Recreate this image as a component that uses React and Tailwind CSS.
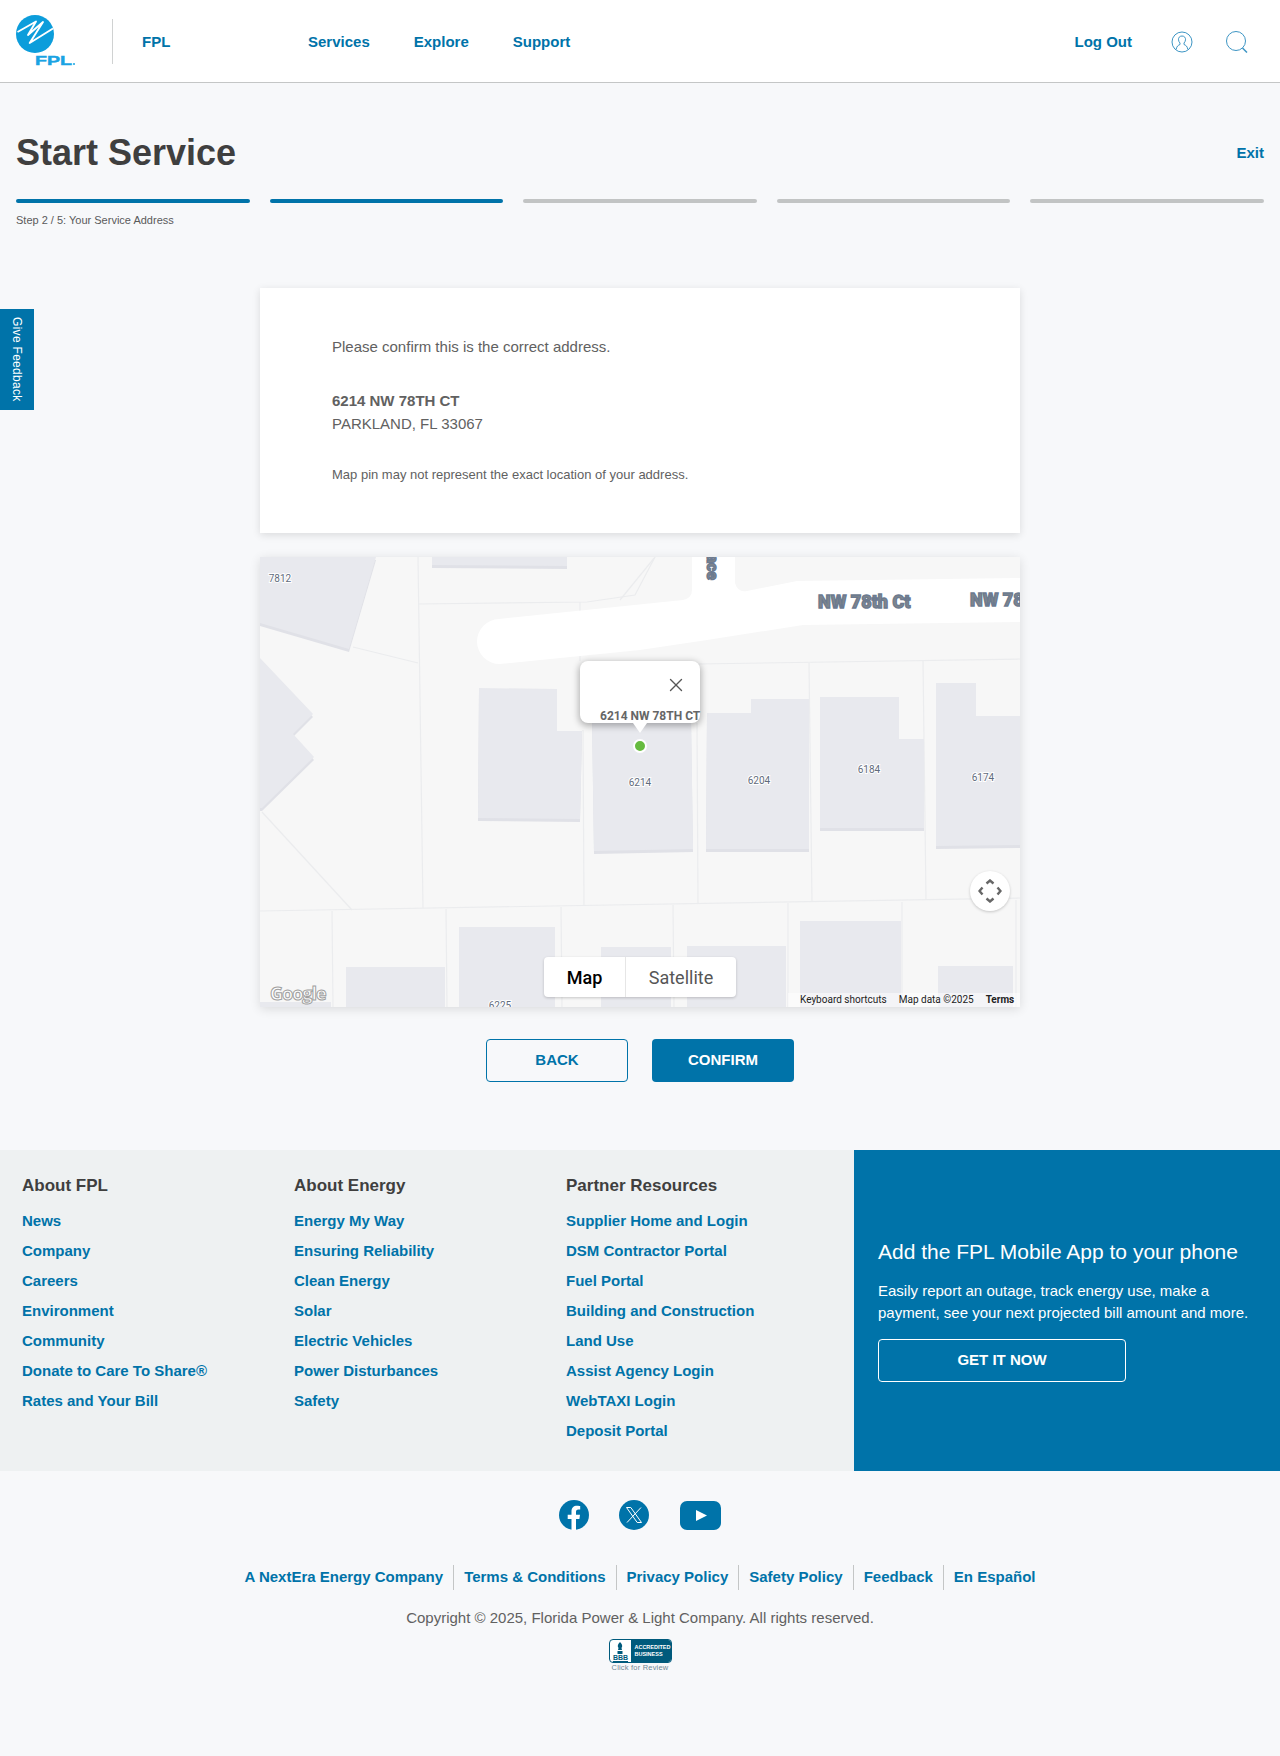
import { X } from 'lucide-react';

const aboutFpl = ['News', 'Company', 'Careers', 'Environment', 'Community', 'Donate to Care To Share®', 'Rates and Your Bill'];
const aboutEnergy = ['Energy My Way', 'Ensuring Reliability', 'Clean Energy', 'Solar', 'Electric Vehicles', 'Power Disturbances', 'Safety'];
const partners = ['Supplier Home and Login', 'DSM Contractor Portal', 'Fuel Portal', 'Building and Construction', 'Land Use', 'Assist Agency Login', 'WebTAXI Login', 'Deposit Portal'];
const legal = ['A NextEra Energy Company', 'Terms & Conditions', 'Privacy Policy', 'Safety Policy', 'Feedback', 'En Español'];

const buildings = [
  '0,0 116,0 89,92 0,66',
  '0,101 53,157 33,177 54,200 2,251 0,251',
  '172,0 307,0 307,9 172,8',
  '219,131 297,132 297,174 322,174 320,262 218,261',
  '332,160 431,160 433,292 334,294',
  '447,156 491,156 491,142 549,142 549,292 446,292',
  '560,140 639,140 639,182 664,182 664,271 560,271',
  '676,126 716,126 716,159 760,159 760,288 676,289',
  '86,410 185,410 185,450 86,450',
  '199,370 295,370 295,450 199,450',
  '341,390 411,390 411,450 341,450',
  '427,389 526,389 526,450 427,450',
  '540,364 641,364 641,450 540,450',
  '678,409 753,409 753,450 678,450',
  '0,445 71,445 71,450 0,450',
];

const lotLines = [
  'M158 0 L163 351', 'M158 47 L327 45 L375 38 L395 0', 'M360 43 L395 0', 'M93 90 L158 106',
  'M320 45 L320 104', 'M323 173 L324 348', 'M2 255 L92 353', 'M438 107 L760 102',
  'M0 354 L760 341', 'M437 166 L438 346', 'M549 106 L552 345', 'M663 104 L666 343',
  'M72 354 L73 450', 'M186 352 L187 450', 'M301 350 L302 450', 'M413 348 L414 450',
  'M528 346 L528 450', 'M642 345 L642 450', 'M756 343 L756 450',
];

const houseNumbers = [
  ['7812', 20, 25], ['6214', 380, 229], ['6204', 499, 227], ['6184', 609, 216], ['6174', 723, 224], ['6225', 240, 452],
];

const MapDrawing = () => (
  <svg className="absolute inset-0" width="760" height="450" viewBox="0 0 760 450">
    <rect width="760" height="450" fill="#f7f7f7" />
    {lotLines.map((d) => (
      <path key={d} d={d} fill="none" stroke="#ebecee" strokeWidth="1.2" />
    ))}
    {buildings.map((p) => (
      <polygon key={p} points={p} fill="#e0e1e7" transform="translate(0 3)" />
    ))}
    {buildings.map((p) => (
      <polygon key={p} points={p} fill="#e8e9ee" />
    ))}
    <path
      d="M239 62 L423 43 Q432 41 432 33 L432 0 L475 0 L475 26 Q478 36 487 34 L537 24 L760 21 L760 65 L543 68 L447 83 L380 93 L240 107 A22.500 22.500 0 0 1 239 62 Z"
      fill="#ffffff"
    />
    {houseNumbers.map(([n, x, y]) => (
      <text key={n} x={x} y={y} textAnchor="middle" fontFamily="Roboto, sans-serif" fontSize="10" fill="#5f6b7c" stroke="#ffffff" strokeWidth="2" paintOrder="stroke">
        {n}
      </text>
    ))}
    <g fontFamily="Roboto, sans-serif" fontWeight="900" fontSize="18" fill="#80868b" stroke="#6b7a90" strokeWidth="1.300">
      <text x="558" y="51">NW 78th Ct</text>
      <text x="710" y="49">NW 78th Ct</text>
    </g>
    <text transform="translate(447 23) rotate(90)" textAnchor="end" fontFamily="Roboto, sans-serif" fontWeight="900" fontSize="16" fill="#80868b" stroke="#6b7a90" strokeWidth="1.300">
      ace
    </text>
    <text x="10" y="443" fontFamily="'Open Sans', sans-serif" fontWeight="700" fontSize="18" letterSpacing="-1" fill="#ffffff" stroke="#a0a0a0" strokeWidth="1">
      Google
    </text>
  </svg>
);

const Logo = () => (
  <svg width="64" height="56" viewBox="0 0 64 56" className="shrink-0">
    <circle cx="19" cy="21" r="19" fill="#0c9ddb" />
    <path d="M1.500 19 L20 8.500 L12 22 L27 9 L13.700 30 L37 15.500" fill="none" stroke="#ffffff" strokeWidth="1.900" strokeLinejoin="round" />
    <text x="19" y="52" fontFamily="'Liberation Sans', sans-serif" fontWeight="700" fontSize="13" fill="#1aa3e3" stroke="#1aa3e3" strokeWidth=".4" textLength="37" lengthAdjust="spacingAndGlyphs">
      FPL
    </text>
    <circle cx="58" cy="51" r="1" fill="#1aa3e3" />
  </svg>
);

const UserIcon = () => (
  <svg width="22" height="22" viewBox="0 0 22 22" fill="none" stroke="#3d95c4" strokeWidth="1">
    <circle cx="11" cy="11" r="10" />
    <path d="M11 5 C8.500 5 7.300 6.800 7.500 8.800 C7.600 10.300 8.300 11.300 9 12 L9 13.500 C7.300 14.200 5.800 15 5.200 18.300 M11 5 C13.500 5 14.700 6.800 14.500 8.800 C14.400 10.300 13.700 11.300 13 12 L13 13.500 C14.700 14.200 16.200 15 16.800 18.300" />
  </svg>
);

const SearchIcon = () => (
  <svg width="22" height="22" viewBox="0 0 22 22" fill="none" stroke="#3d95c4" strokeWidth="1">
    <circle cx="10" cy="10" r="9.500" />
    <path d="M16.500 17 L21 21.500" strokeWidth="1.500" />
  </svg>
);

const FooterColumn = ({ title, links, className }) => (
  <div className={className}>
    <h3 className="text-[17px] leading-[20px] font-bold text-[#3f3f3f]">{title}</h3>
    <ul className="mt-[10px]">
      {links.map((link) => (
        <li key={link} className="h-[30px] text-[15px] leading-[30px] font-bold text-[#0073a9]">
          {link}
        </li>
      ))}
    </ul>
  </div>
);

const App = () => {
  return (
    <div className="relative min-h-[1756px] bg-[#f7f8fa] font-['Liberation_Sans',Arial,sans-serif] text-[#3f3f3f]">
      <header className="flex h-[83px] items-center border-b border-[#c4c6c6] bg-white pl-[16px] pr-[32px]">
        <Logo />
        <div className="ml-[32px] h-[45px] w-px bg-[#d0d2d2]" />
        <span className="ml-[29px] w-[166px] pt-[3px] text-[15px] font-bold text-[#0073a9]">FPL</span>
        <nav className="flex gap-[44px] pt-[3px] text-[15px] font-bold text-[#0073a9]">
          <span>Services</span>
          <span>Explore</span>
          <span>Support</span>
        </nav>
        <span className="ml-auto pt-[3px] text-[15px] font-bold text-[#0073a9]">Log Out</span>
        <div className="ml-[39px] flex gap-[33px] pt-[1px]">
          <UserIcon />
          <SearchIcon />
        </div>
      </header>

      <div className="absolute left-0 top-[309px] flex h-[101px] w-[34px] items-center justify-center bg-[#0073a9] text-[12px] tracking-[0.3px] text-white [writing-mode:vertical-rl]">
        Give Feedback
      </div>

      <main>
        <div className="px-[16px]">
          <div className="flex items-center justify-between pt-[48px]">
            <h1 className="text-[36px] leading-[44px] font-bold text-[#3f3f3f]">Start Service</h1>
            <a className="text-[15px] font-bold text-[#0073a9]">Exit</a>
          </div>
          <div className="mt-[24px] flex gap-[20px]">
            <div className="h-[4px] flex-1 rounded-sm bg-[#0073a9]" />
            <div className="h-[4px] flex-1 rounded-sm bg-[#0073a9]" />
            <div className="h-[4px] flex-1 rounded-sm bg-[#c2c4c4]" />
            <div className="h-[4px] flex-1 rounded-sm bg-[#c2c4c4]" />
            <div className="h-[4px] flex-1 rounded-sm bg-[#c2c4c4]" />
          </div>
          <p className="mt-[10px] text-[11px] leading-[14px] text-[#5a5a5a]">Step 2 / 5: Your Service Address</p>
        </div>

        <section className="mx-auto mt-[61px] h-[245px] w-[760px] bg-white pl-[72px] pt-[48px] text-[#616161] shadow-[0_2px_8px_rgba(0,0,0,0.12)]">
          <p className="text-[15px] leading-[22px]">Please confirm this is the correct address.</p>
          <p className="mt-[32px] text-[15px] leading-[22px] font-bold">6214 NW 78TH CT</p>
          <p className="text-[15px] leading-[23px]">PARKLAND, FL 33067</p>
          <p className="mt-[32px] text-[13px] leading-[16px]">Map pin may not represent the exact location of your address.</p>
        </section>

        <section className="relative mx-auto mt-[24px] h-[450px] w-[760px] overflow-hidden shadow-[0_2px_10px_rgba(0,0,0,0.12)]">
          <MapDrawing />

          <div className="absolute left-[320px] top-[104px] h-[62px] w-[120px] rounded-lg bg-white shadow-[0_2px_7px_1px_rgba(0,0,0,0.3)]">
            <X className="absolute right-[13px] top-[13px] h-[22px] w-[22px] text-[#565656]" strokeWidth={1.5} />
            <span className="absolute left-[20px] top-[48px] whitespace-nowrap font-['Roboto',sans-serif] text-[12px] leading-[14px] font-bold text-[#666666]">
              6214 NW 78TH CT
            </span>
          </div>
          <div className="absolute left-[373px] top-[166px] h-0 w-0 border-x-[7px] border-t-[10px] border-x-transparent border-t-white" />
          <div className="absolute left-[373px] top-[182px] h-[14px] w-[14px] rounded-full border-2 border-white bg-[#66bb3f]" />

          <div className="absolute left-[710px] top-[314px] flex h-[40px] w-[40px] items-center justify-center rounded-full bg-white shadow-[0_1px_3px_rgba(0,0,0,0.2)]">
            <svg width="24" height="24" viewBox="0 0 24 24" fill="none" stroke="#666666" strokeWidth="2.400">
              <path d="M8.500 4.500 L12 1.500 L15.500 4.500 M8.500 19.500 L12 22.500 L15.500 19.500 M4.500 8.500 L1.500 12 L4.500 15.500 M19.500 8.500 L22.500 12 L19.500 15.500" />
            </svg>
          </div>

          <div className="absolute left-[284px] top-[400px] flex h-[40px] w-[192px] rounded-sm bg-white font-['Roboto',sans-serif] text-[18px] shadow-[0_1px_3px_rgba(0,0,0,0.2)]">
            <div className="flex w-[82px] items-center justify-center border-r border-[#e6e6e6] font-medium text-black">Map</div>
            <div className="flex flex-1 items-center justify-center text-[#565656]">Satellite</div>
          </div>

          <div className="absolute bottom-0 right-0 flex h-[14px] w-[232px] items-center bg-white/50 pl-[12px] font-['Roboto',sans-serif] text-[10px] leading-[14px] text-[#222222]">
            <span>Keyboard shortcuts</span>
            <span className="ml-[12px]">Map data ©2025</span>
            <span className="ml-[12px] font-bold">Terms</span>
          </div>
        </section>

        <div className="mt-[32px] flex justify-center gap-[24px]">
          <button className="h-[43px] w-[142px] rounded border border-[#0073a9] text-[15px] font-bold text-[#0073a9]">BACK</button>
          <button className="h-[43px] w-[142px] rounded bg-[#0073a9] text-[15px] font-bold text-white">CONFIRM</button>
        </div>
      </main>

      <footer className="mt-[68px]">
        <div className="flex h-[321px]">
          <div className="flex flex-1 bg-[#eef1f2] pl-[22px] pt-[26px]">
            <FooterColumn title="About FPL" links={aboutFpl} className="w-[272px]" />
            <FooterColumn title="About Energy" links={aboutEnergy} className="w-[272px]" />
            <FooterColumn title="Partner Resources" links={partners} />
          </div>
          <div className="w-[426px] bg-[#0073a9] px-[24px] pt-[88px] text-white">
            <h3 className="text-[21px] leading-[28px]">Add the FPL Mobile App to your phone</h3>
            <p className="mt-[14px] text-[15px] leading-[22px]">Easily report an outage, track energy use, make a payment, see your next projected bill amount and more.</p>
            <button className="mt-[15px] h-[43px] w-[248px] rounded border border-white text-[15px] font-bold">GET IT NOW</button>
          </div>
        </div>

        <div className="mt-[29px] flex items-center justify-center">
          <svg width="30" height="30" viewBox="0 0 30 30">
            <circle cx="15" cy="15" r="15" fill="#0073a9" />
            <path d="M12.500 30 L12.500 19 L8.700 19 L8.700 14.700 L12.500 14.700 L12.500 11.400 C12.500 7.700 14.700 5.700 18 5.700 C19.600 5.700 21.200 6 21.200 6 L21.200 9.600 L19.400 9.600 C17.600 9.600 17 10.700 17 11.900 L17 14.700 L21 14.700 L20.400 19 L17 19 L17 30 Z" fill="#ffffff" />
          </svg>
          <svg width="30" height="30" viewBox="0 0 30 30" className="ml-[30px]">
            <circle cx="15" cy="15" r="15" fill="#0073a9" />
            <path d="M7.500 7.500 L11.800 7.500 L22.500 22.500 L18.200 22.500 Z M22 7.500 L8 22.500" fill="none" stroke="#ffffff" strokeWidth="1" />
          </svg>
          <svg width="41" height="29" viewBox="0 0 41 29" className="ml-[31px]">
            <rect width="41" height="29" rx="7" fill="#0073a9" />
            <path d="M16 9 L27 14.500 L16 20 Z" fill="#ffffff" />
          </svg>
        </div>

        <div className="mt-[35px] flex justify-center">
          {legal.map((item, i) => (
            <span
              key={item}
              className={`flex h-[25px] items-center border-[#c4c6c6] px-[10px] text-[15px] font-bold text-[#0073a9] ${i < legal.length - 1 ? 'border-r' : ''}`}
            >
              {item}
            </span>
          ))}
        </div>

        <p className="mt-[20px] text-center text-[15px] leading-[16px] text-[#616161]">Copyright © 2025, Florida Power &amp; Light Company. All rights reserved.</p>

        <div className="mt-[13px] flex flex-col items-center">
          <div className="flex h-[24px] w-[63px] overflow-hidden rounded-sm border border-[#005a7c] bg-white">
            <div className="flex w-[22px] flex-col items-center justify-end text-[7px] leading-[8px] font-bold text-[#005a7c]">
              <svg width="8" height="12" viewBox="0 0 8 12" fill="#005a7c">
                <path d="M4 0 C6 2 7 4 5.500 6 L6 8 L2 8 L2.500 6 C1 4 2 2 4 0 Z M1.500 9 L6.500 9 L6.500 12 L1.500 12 Z" />
              </svg>
              <span className="underline">BBB</span>
            </div>
            <div className="flex flex-1 flex-col justify-center bg-[#005a7c] pl-[3px] text-[5.500px] leading-[7px] font-bold text-white">
              <span>ACCREDITED</span>
              <span>BUSINESS</span>
            </div>
          </div>
          <span className="text-[7.500px] leading-[10px] tracking-[0.2px] text-[#6f8793]">Click for Review</span>
        </div>
      </footer>
    </div>
  );
};

export default App;
